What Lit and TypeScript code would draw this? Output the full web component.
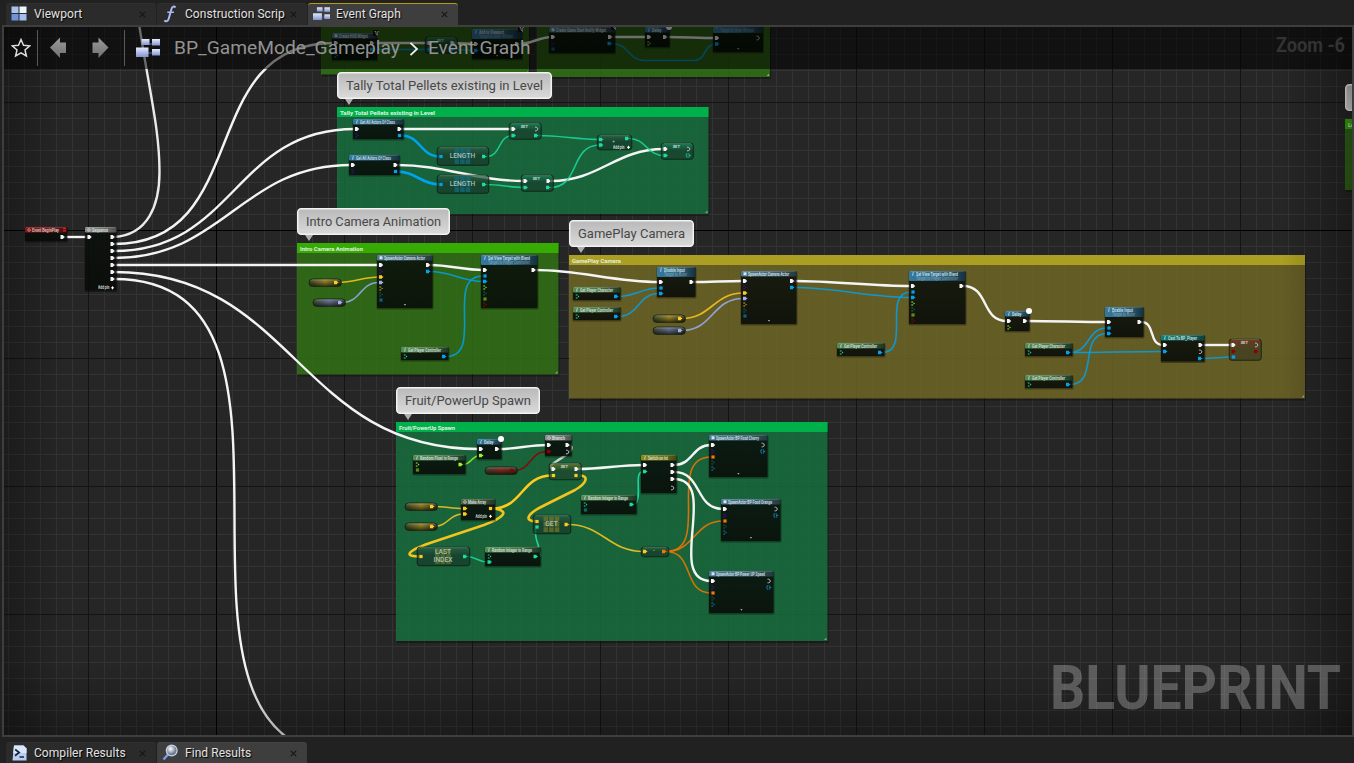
import { LitElement, html, svg, css } from "lit";
import { customElement, property } from "lit/decorators.js";

const WHITE = "#f4f4f4";
const BLUE = "#00a2ee";
const TEAL = "#1bdba0";
const YEL = "#ffc91e";
const LAV = "#9fadf5";
const GRN = "#9bf52e";
const RED = "#8e0000";
const ORG = "#f57600";
const PUR = "#4a10a8";
const DTEAL = "#0c6a5c";
const DBLUE = "#0f5b85";
const DGRN = "#5c8a1c";

// kind: e exec, o open exec, d data, s array, h open data, a open array
type Pin = [string, number, number, string?];
interface GNode {
  x: number; y: number; w: number; h: number;
  head: string; title: string; tw: number; sub?: string; subw?: number;
  pins: Pin[]; add?: number[]; arrow?: boolean; clock?: boolean; local?: boolean; mark?: boolean;
}

const spawn = (x: number, y: number): GNode => ({
  x, y, w: 55.5, h: 53, head: "blueS", title: "SpawnActor Camera Actor", tw: 41, arrow: true,
  pins: [["e", 4, 10], ["h", 4, 16.5, PUR], ["d", 4, 22, YEL], ["d", 4, 27.5, LAV], ["h", 4, 33.5, "#d9a520"],
    ["h", 4, 39.5, DTEAL], ["s", 4, 45, DBLUE], ["e", 51, 10], ["d", 51, 16.5, BLUE]],
});
const view = (x: number, y: number): GNode => ({
  x, y, w: 56.5, h: 53, head: "blue", title: "Set View Target with Blend", tw: 42, sub: "Target is Player Controller", subw: 42,
  pins: [["e", 4, 15], ["s", 4, 21, BLUE], ["d", 4, 26.5, BLUE], ["h", 4, 32.5, GRN], ["h", 4, 38.5, DTEAL],
    ["s", 4, 44, DGRN], ["h", 4, 49.5, "#a30000"], ["e", 52.5, 15]],
});
const getter = (x: number, y: number, what: string): GNode => ({
  x, y, w: 47.5, h: 13, head: "green", title: "Get Player " + what, tw: 33,
  pins: [["h", 4.5, 9.5, TEAL], ["d", 43, 9.5, BLUE]],
});
const input = (x: number, y: number, what: string): GNode => ({
  x, y, w: 38.5, h: 30, head: "blue", title: what + " Input", tw: 21, sub: "Target is Actor", subw: 23,
  pins: [["e", 4, 15], ["s", 4, 21, BLUE], ["d", 4, 26.5, BLUE], ["e", 34.5, 15]],
});
const actors = (x: number, y: number): GNode => ({
  x, y, w: 50.5, h: 20, head: "blue", title: "Get All Actors Of Class", tw: 35,
  pins: [["e", 4, 10], ["h", 4, 16.5, PUR], ["e", 46.5, 10], ["s", 46.5, 16.5, BLUE]],
});
const delay = (x: number, y: number, kind = "h"): GNode => ({
  x, y, w: 24.5, h: 20, head: "blue", title: "Delay", tw: 9.5, clock: true,
  pins: [["e", 4, 10], [kind, 4, 16.5, GRN], ["e", 20, 10]],
});
const food = (x: number, y: number, w: number, title: string, tw: number): GNode => ({
  x, y, w, h: 42, head: "blueS", title, tw, arrow: true,
  pins: [["e", 4, 10], ["h", 4, 16.5, PUR], ["s", 4, 22, ORG], ["h", 4, 27.5, DTEAL], ["h", 4, 33.5, "#1180bb"],
    ["o", w - 4.5, 10], ["a", w - 5, 16.5, "#1591cf"]],
});
const random = (x: number, y: number, w: number, title: string, tw: number, c: string, second: string): GNode => ({
  x, y, w, h: 19, head: "green", title, tw,
  pins: [["h", 4.5, 9.5, c], [second, 4.5, 15, second === "s" ? (c === GRN ? DGRN : DTEAL) : c], ["d", w - 5, 9.5, c]],
});

const NODES: GNode[] = [
  { x: 25, y: 227, w: 42, h: 14, head: "red", title: "Event BeginPlay", tw: 27, pins: [["e", 37.5, 10]], mark: true },
  {
    x: 85, y: 227, w: 31.5, h: 63.5, head: "gray", title: "Sequence", tw: 16, add: [13, 61, 27.5],
    pins: [["e", 4.5, 10], ...[10, 17, 24, 31, 38, 45, 52].map((v) => ["e", 27.5, v] as Pin)],
  },
  actors(353, 119), actors(349, 155),
  spawn(377, 255), view(481, 255), getter(401, 347, "Controller"),
  getter(573, 287, "Character"), getter(573, 307, "Controller"), input(657, 267, "Disable"),
  spawn(741, 271), view(909, 271), getter(837, 343, "Controller"), delay(1005, 311),
  getter(1025, 343, "Character"), getter(1025, 375, "Controller"), input(1105, 307, "Enable"),
  {
    x: 1161, y: 335, w: 43.5, h: 26.5, head: "teal", title: "Cast To BP_Player", tw: 29,
    pins: [["e", 4, 10], ["d", 4, 16.5, BLUE], ["e", 39.5, 10], ["o", 39.5, 16.8], ["d", 39, 23.5, BLUE]],
  },
  delay(477, 439, "d"),
  random(413, 455, 52.5, "Random Float in Range", 38, GRN, "s"),
  {
    x: 545, y: 435, w: 26.5, h: 21, head: "gray", title: "Branch", tw: 13,
    pins: [["e", 4, 10], ["d", 4, 16.5, RED], ["e", 22.5, 10], ["o", 22.5, 17]],
  },
  {
    x: 461, y: 499, w: 34, h: 21, head: "moss", title: "Make Array", tw: 18, add: [14.5, 17.5, 29.5],
    pins: [["d", 4, 9.5, YEL], ["d", 4, 15, YEL], ["s", 29.5, 9.5, YEL]],
  },
  random(485, 547, 55.5, "Random Integer in Range", 40, TEAL, "d"),
  random(581, 495, 55.5, "Random Integer in Range", 40, TEAL, "s"),
  {
    x: 641, y: 455, w: 35.5, h: 38, head: "yellow", title: "Switch on Int", tw: 20,
    pins: [["e", 4, 10], ["d", 4, 16.5, TEAL], ["e", 31.5, 10], ["e", 31.5, 17], ["e", 31.5, 24], ["o", 31.5, 33]],
  },
  food(709, 435, 58.5, "SpawnActor BP Food Cherry", 43),
  food(721, 499, 59.5, "SpawnActor BP Food Orange", 44),
  food(709, 571, 64.5, "SpawnActor BP Power UP Speed", 49),
  {
    x: 332, y: 33, w: 45, h: 27, head: "blueS", title: "Create HUD Widget", tw: 29, local: true,
    pins: [["e", 4, 10], ["h", 4, 16.5, PUR], ["h", 4, 22.5, BLUE], ["e", 40, 10], ["d", 40, 16.5, BLUE]],
  },
  {
    x: 472, y: 29, w: 50, h: 30, head: "blue", title: "Add to Viewport", tw: 25, sub: "Target is User Widget", subw: 34, local: true, arrow: true,
    pins: [["e", 4, 15], ["d", 4, 21.5, BLUE], ["e", 45, 15]],
  },
  {
    x: 549, y: 27, w: 66, h: 26, head: "blueS", title: "Create Game Start Notify Widget", tw: 50, local: true,
    pins: [["e", 4, 10], ["h", 4, 16.5, PUR], ["s", 4, 22, DBLUE], ["e", 61, 10], ["d", 60.5, 16.5, BLUE]],
  },
  delay(645, 27),
  {
    x: 713, y: 23, w: 50, h: 29, head: "blue", title: "", tw: 0, sub: "Target is User Widget", subw: 34, arrow: true,
    pins: [["e", 4, 15], ["d", 4, 21, BLUE], ["o", 45, 15]],
  },
];

interface Compact {
  x: number; y: number; w: number; h: number; tint: string; label?: string[]; small?: string;
  tiles?: string; pins: Pin[]; add?: number[];
}
const setNode = (x: number, y: number, c: string, tint: string, out: string, dataOut = "d", h = 16.5, extra: Pin[] = []): Compact => ({
  x, y, w: 32.5, h, tint, small: "SET",
  pins: [["e", 4.5, 6], [out, 27.5, 6], [c === YEL ? "s" : "d", 4.5, 12.5, c], [dataOut, 27, 12.5, c], ...extra],
});
const COMPACT: Compact[] = [
  { x: 437, y: 147, w: 52, h: 18.5, tint: "cgray", label: ["LENGTH"], tiles: "#137088", pins: [["s", 4, 9.5, BLUE], ["d", 47, 9.5, TEAL]] },
  { x: 437, y: 175, w: 52, h: 18.5, tint: "cgray", label: ["LENGTH"], tiles: "#137088", pins: [["s", 4, 9.5, BLUE], ["d", 47, 9.5, TEAL]] },
  setNode(509, 123, TEAL, "cteal", "o"),
  setNode(521, 175, TEAL, "cteal", "e"),
  { x: 597, y: 135, w: 35, h: 15, tint: "cgray", add: [16, 12.5, 31.5], small: "+", pins: [["d", 4, 4.5, TEAL], ["d", 4, 10, TEAL], ["d", 30, 3.5, TEAL]] },
  setNode(661, 143, TEAL, "cteal", "o", "a"),
  setNode(1229, 339, RED, "cred", "o", "d", 21.5, [["s", 4.5, 18, BLUE]]),
  setNode(549, 463, YEL, "cyel", "e", "s", 17),
  setNode(425, 37, BLUE, "cteal", "e"),
  { x: 533, y: 515, w: 38, h: 19, tint: "cgray", label: ["GET"], tiles: "#7d7d28", pins: [["s", 4, 6.5, YEL], ["s", 4, 12, TEAL], ["d", 33.5, 9.5, YEL]] },
  { x: 417, y: 547, w: 53, h: 19, tint: "cgray", label: ["LAST", "INDEX"], tiles: "#6c7a2a", pins: [["s", 4, 9.5, YEL], ["d", 48, 9.5, TEAL]] },
  { x: 641, y: 547, w: 28, h: 10, tint: "cgray", small: "•", pins: [["d", 4, 4.5, YEL], ["d", 23, 4.5, ORG]] },
];

// variable pills: x, y, gradient, pin colour
const VARS: [number, number, string, string][] = [
  [309, 279, "pyel", YEL], [313, 299, "plav", LAV], [653, 315, "pyel", YEL], [653, 327, "plav", LAV],
  [485, 467, "pred", RED], [405, 503, "pyel", YEL], [405, 523, "pyel", YEL],
];

// wires between pins: x1, y1, x2, y2, colour, thickness
const W = 2.4, T = 1.6, A = 2.6;
const WIRES: [number, number, number, number, string, number][] = [
  [64, 237, 88, 237, WHITE, W],
  [114, 244, 334, 43, WHITE, W], [114, 251, 355, 129, WHITE, W], [114, 258, 351, 165, WHITE, W],
  [114, 265, 379, 265, WHITE, W], [114, 272, 479, 449, WHITE, W], [114, 279, 355, 757, WHITE, W],
  [401, 129, 512, 129, WHITE, W], [397, 165, 524, 181, WHITE, W], [551, 181, 664, 149, WHITE, W],
  [401, 135.5, 440, 156.5, BLUE, A], [397, 171.5, 440, 184.5, BLUE, A],
  [486, 156.5, 513, 135.5, TEAL, T], [486, 184.5, 524, 187.5, TEAL, T],
  [538, 135.5, 600, 139.5, TEAL, T], [550, 187.5, 600, 145, TEAL, T], [629, 138.5, 664, 155.5, TEAL, T],
  [430, 265, 483, 270, WHITE, W], [430, 271.5, 483, 281.5, BLUE, T], [446, 356.5, 483, 276, BLUE, T],
  [338, 282.5, 379, 277, YEL, T], [342, 302.5, 379, 282.5, LAV, T],
  [535, 270, 659, 282, WHITE, W], [618, 296.5, 659, 288, BLUE, T], [618, 316.5, 659, 293.5, BLUE, T],
  [693, 282, 743, 281, WHITE, W], [682, 318.5, 743, 293, YEL, T], [682, 330.5, 743, 298.5, LAV, T],
  [794, 281, 911, 286, WHITE, W], [794, 287.5, 911, 297.5, BLUE, T], [882, 352.5, 911, 292, BLUE, T],
  [963, 286, 1007, 321, WHITE, W], [1027, 321, 1107, 322, WHITE, W],
  [1070, 352.5, 1107, 328, BLUE, T], [1070, 384.5, 1107, 333.5, BLUE, T], [1070, 352.5, 1163, 351.5, BLUE, T],
  [1141, 322, 1163, 345, WHITE, W], [1202, 345, 1232, 345, WHITE, W], [1202, 358.5, 1232, 357, BLUE, T],
  [499, 449, 547, 445, WHITE, W], [463, 464.5, 480, 455.5, GRN, T], [514, 470.5, 547, 451.5, RED, T],
  [578, 469, 643, 465, WHITE, W], [434, 506.5, 463, 508.5, YEL, T], [434, 526.5, 463, 514, YEL, T],
  [492, 508.5, 552, 475.5, YEL, A], [467, 556.5, 487, 562, TEAL, T], [568, 524.5, 643, 551.5, YEL, T],
  [666, 551.5, 711, 457, ORG, T], [666, 551.5, 723, 521, ORG, T], [666, 551.5, 711, 593, ORG, T],
  [674, 465, 711, 445, WHITE, W], [674, 472, 723, 509, WHITE, W], [674, 479, 711, 581, WHITE, W],
  [374, 43, 430, 43, WHITE, W], [454, 43, 476, 44, WHITE, W], [374, 49.5, 430, 49.5, BLUE, T], [454, 49.5, 476, 50.5, BLUE, T],
  [519, 44, 552, 37, WHITE, W], [612, 37, 648, 37, WHITE, W], [667, 37, 716, 38, WHITE, W],
  [612, 43.5, 645, 60.5, BLUE, T], [645, 60.5, 694, 60.5, BLUE, T], [694, 60.5, 716, 44, BLUE, T],
];
const LOOPS: [string, string, number][] = [
  ["M114 237C148 235 159.500 205 159.500 172C159.500 130 150 95 139 24", WHITE, W],
  ["M569 445C577 448 566 455 557 461C550 465 549 469 553 469", "#d8d8d8", W],
  ["M494 508.500C511 511 503 518 484 525L430 543C404 552 405 557 421 556.500", YEL, A],
  ["M580 475.500C589 476 587 483 575 490L545 505C526 514 524 521 536 521.500", YEL, A],
  ["M540 556.500C541 545 533 540 536 527", TEAL, T],
  ["M635 504.500C643 497 633 472 643 471.500", TEAL, T],
];

// comment boxes: x, y, w, h, header, body, title, title width
const COMMENTS: [number, number, number, number, string, string, string, number][] = [
  [321, -60, 208, 134.5, "#35ab04", "rgba(55,127,22,.75)", "", 0],
  [537, -60, 233, 137, "#35ab04", "rgba(55,127,22,.75)", "", 0],
  [337, 107, 371.5, 107, "#00b04b", "rgba(24,124,68,.75)", "Tally Total Pellets existing in Level", 95],
  [297, 243, 261.5, 131.500, "#35ab04", "rgba(55,127,22,.75)", "Intro Camera Animation", 63],
  [569, 255, 736, 143.500, "#ab9e22", "rgba(126,115,41,.75)", "GamePlay Camera", 49],
  [396, 422, 431.5, 219, "#00b04b", "rgba(24,124,68,.75)", "Fruit/PowerUp Spawn", 56],
  [1345, 119, 60, 71, "#35ab04", "rgba(55,127,22,.75)", "Le", 6],
];
const BUBBLES: [number, number, number, string, number][] = [
  [337, 72, 215, "Tally Total Pellets existing in Level", 197],
  [297, 208, 153, "Intro Camera Animation", 135],
  [569, 220, 125, "GamePlay Camera", 107],
  [396, 387, 144, "Fruit/PowerUp Spawn", 126],
  [1345, 84, 120, "", 0],
];

const wirePath = (x1: number, y1: number, x2: number, y2: number) => {
  const t = (Math.abs(x2 - x1) + Math.abs(y2 - y1)) / 3;
  return `M${x1} ${y1}C${x1 + t} ${y1} ${x2 - t} ${y2} ${x2} ${y2}`;
};

const drawPin = (nx: number, ny: number, [k, px, py, color]: Pin) => {
  const x = nx + px, y = ny + py, c = color ?? WHITE;
  switch (k) {
    case "e": return svg`<path d="M${x - 2} ${y - 2}h2.200l2 2l-2 2h-2.200z" fill=${WHITE}/>`;
    case "o": return svg`<path d="M${x - 1.5} ${y - 1.800}h1.200q1.600 .4 1.600 1.800t-1.600 1.800h-1.200" fill="none" stroke="#c4c4c4" stroke-width=".9"/>`;
    case "d": return svg`<path d="M${x - 2} ${y - 1.700}h3v.8l1.600 .9l-1.600 .9v.8h-3z" fill=${c}/>`;
    case "s": return svg`<rect x=${x - 1.600} y=${y - 1.600} width="3.200" height="3.200" fill=${c}/>`;
    case "a": return svg`<rect x=${x - 1.700} y=${y - 1.500} width="3" height="3" fill="none" stroke=${c} stroke-width="1" stroke-dasharray="1.200 .7"/><path d="M${x + 1.800} ${y - 1}l1.200 1l-1.200 1z" fill=${c}/>`;
    default: return svg`<path d="M${x - 1.700} ${y - 1.500}h1.800m-1.800 3h1.800" fill="none" stroke=${c} stroke-width="1"/><path d="M${x + 0.500} ${y - 1.100}l1.500 1.100l-1.500 1.100z" fill=${c}/>`;
  }
};

const addPin = (x: number, y: number, [tx, ty, px]: number[]) => svg`
  <text class="tiny" x=${x + tx} y=${y + ty + 1.300} textLength="11.500" lengthAdjust="spacingAndGlyphs">Add pin</text>
  <path d="M${x + px - 1.500} ${y + ty - 0.200}h3m-1.500 -1.500v3" stroke="#fff" stroke-width="1"/>`;

const HEADS: [string, string, string][] = [
  ["blue", "#35789f", "#14303d"], ["blueS", "#4b7793", "#22383e"], ["green", "#568a52", "#1b3423"],
  ["gray", "#8d8d8d", "#4c4e4d"], ["red", "#a51a1a", "#3d0d0d"], ["teal", "#137d78", "#0d4040"],
  ["yellow", "#8c8a14", "#3f4714"], ["moss", "#55664c", "#24352a"],
];
const TINTS: [string, string, string][] = [
  ["cgray", "#2c5f47", "#173a2a"], ["cteal", "#1c805e", "#183f2d"], ["cred", "#702a1e", "#3f3c20"], ["cyel", "#77762a", "#1c452e"],
];
const PILLS: [string, string][] = [["pyel", "#a08a28"], ["plav", "#6a7499"], ["pred", "#8a2c24"]];

const drawNode = (n: GNode) => {
  const hh = n.sub ? 10 : 5.500;
  return svg`
    <rect x=${n.x - 0.500} y=${n.y + 0.500} width=${n.w + 1.500} height=${n.h + 1} rx="1.500" fill="#000" opacity=".35"/>
    <rect x=${n.x} y=${n.y} width=${n.w} height=${n.h} rx="1.200" fill="url(#body)"/>
    <rect x=${n.x} y=${n.y} width=${n.w} height=${hh} rx="1.200" fill=${`url(#${n.head})`}/>
    <path d="M${n.x + 1} ${n.y + 0.400}h${n.w - 2}" stroke="#fff" stroke-opacity=".25" stroke-width=".7"/>
    ${n.head === "blueS"
      ? svg`<rect x=${n.x + 2.500} y=${n.y + 1.300} width="3" height="3" fill="#d7e4ea"/>`
      : n.head === "gray" || n.head === "red" || n.head === "moss"
        ? svg`<circle cx=${n.x + 4} cy=${n.y + 3} r="1.300" fill="none" stroke="#ddd" stroke-width=".7"/>`
        : svg`<path d="M${n.x + 4.800} ${n.y + 1.200}q-1 0-1 1.600v2" fill="none" stroke="#bfe6ff" stroke-width=".8"/>`}
    ${n.title ? svg`<text class="tiny" x=${n.x + 7} y=${n.y + 4.600} textLength=${n.tw} lengthAdjust="spacingAndGlyphs">${n.title}</text>` : ""}
    ${n.sub ? svg`<text class="tiny dim" x=${n.x + 7} y=${n.y + 9.200} textLength=${n.subw} lengthAdjust="spacingAndGlyphs">${n.sub}</text>` : ""}
    ${n.pins.map((p) => drawPin(n.x, n.y, p))}
    ${n.add ? addPin(n.x, n.y, n.add) : ""}
    ${n.arrow ? svg`<path d="M${n.x + n.w / 2 - 1} ${n.y + n.h - 3.700}h2.400l-1.200 1.300z" fill="#ddd"/>` : ""}
    ${n.clock ? svg`<circle cx=${n.x + n.w - 0.500} cy=${n.y} r="3" fill="#fff"/>` : ""}
    ${n.local ? svg`<rect x=${n.x + n.w - 4} y=${n.y - 3} width="6" height="6" rx="1" fill="#101010"/><path d="M${n.x + n.w - 2.500} ${n.y - 1.500}h1.500v2.500l1.800 1.500v-4h1" fill="none" stroke="#f0f0f0" stroke-width="1"/>` : ""}
    ${n.mark ? svg`<rect x=${n.x + n.w - 4} y=${n.y + 1} width="3" height="3.500" fill="#e01c1c"/><path d="M${n.x + n.w - 4} ${n.y + 2.700}h3" stroke="#400" stroke-width=".7"/>` : ""}`;
};

const drawCompact = (n: Compact) => {
  const cx = n.x + n.w / 2 - (n.label ? 0.500 : 0);
  return svg`
    <rect x=${n.x + 0.250} y=${n.y + 0.250} width=${n.w - 0.500} height=${n.h - 0.500} rx="2.400" fill=${`url(#${n.tint})`} fill-opacity=".75" stroke="#0a1c12" stroke-opacity=".8" stroke-width="1"/>
    <path d="M${n.x + 2.500} ${n.y + 0.600}h${n.w - 5}" stroke="#cfe" stroke-opacity=".35" stroke-width=".8"/>
    ${n.tiles ? [0, 1, 2].map((i) => [0, 1, 2].map((j) => svg`<rect x=${cx - 8 + i * 5.600} y=${n.y + 1.500 + j * 5.400} width="4.600" height="4.700" fill=${n.tiles} opacity=".65"/>`)) : ""}
    ${n.label ? n.label.map((t, i) => svg`<text class="label" x=${cx} y=${n.label!.length > 1 ? n.y + 7 + i * 8 : n.y + 11.200}>${t}</text>`) : ""}
    ${n.small ? svg`<text class="tiny mid" x=${n.x + n.w / 2 - 1} y=${n.small === "+" ? n.y + 8 : n.y + 5}>${n.small}</text>` : ""}
    ${n.pins.map((p) => drawPin(n.x, n.y, p))}
    ${n.add ? addPin(n.x, n.y, n.add) : ""}`;
};

@customElement("blueprint-graph")
class BlueprintGraph extends LitElement {
  static styles = css`
    :host { display: block; width: 1348px; height: 708px; }
    svg { display: block; font-family: Roboto, "Liberation Sans", sans-serif; }
    .tiny { font-size: 4.600px; font-weight: 700; fill: #dfe6e2; opacity: .88; }
    .dim { opacity: .32; }
    .mid { text-anchor: middle; font-size: 4px; }
    .label { font-size: 6.700px; font-weight: 500; fill: #a9bfb4; text-anchor: middle; }
    .ctitle { font-size: 5.800px; font-weight: 700; fill: #e0f0e0; }
    .bubble { font-size: 13.500px; fill: #484848; }
    .mark { font-size: 62px; font-weight: 700; fill: #fff; opacity: .25; }
  `;
  render() {
    const xs = Array.from({ length: 85 }, (_, i) => 8 + i * 16);
    const ys = Array.from({ length: 45 }, (_, i) => 22 + i * 16);
    return html`<svg width="1348" height="708" viewBox="4 27 1348 708">
      <defs>
        <linearGradient id="body" x1="0" y1="0" x2="0" y2="1"><stop offset="0" stop-color="#0b100c" stop-opacity=".76"/><stop offset="1" stop-color="#080c08" stop-opacity=".84"/></linearGradient>
        ${HEADS.map(([id, a, b]) => svg`<linearGradient id=${id}><stop offset="0" stop-color=${a}/><stop offset=".5" stop-color=${a} stop-opacity=".85"/><stop offset="1" stop-color=${b}/></linearGradient>`)}
        ${TINTS.map(([id, a, b]) => svg`<linearGradient id=${id} x1="0" y1="0" x2="0" y2="1"><stop offset="0" stop-color=${a}/><stop offset=".45" stop-color=${b}/><stop offset="1" stop-color=${b}/></linearGradient>`)}
        ${PILLS.map(([id, a]) => svg`<linearGradient id=${id}><stop offset="0" stop-color="#3a4a2c"/><stop offset=".5" stop-color=${a}/><stop offset="1" stop-color="#303a24"/></linearGradient>`)}
        <linearGradient id="pillShade" x1="0" y1="0" x2="0" y2="1"><stop offset="0" stop-color="#fff" stop-opacity=".3"/><stop offset=".35" stop-color="#000" stop-opacity=".1"/><stop offset="1" stop-color="#000" stop-opacity=".6"/></linearGradient>
        <linearGradient id="bub" x1="0" y1="0" x2="0" y2="1"><stop offset="0" stop-color="#b9b9b9"/><stop offset="1" stop-color="#dadada"/></linearGradient>
        <linearGradient id="edgeL"><stop offset="0" stop-color="#000" stop-opacity=".28"/><stop offset="1" stop-color="#000" stop-opacity="0"/></linearGradient>
        <linearGradient id="edgeR"><stop offset="0" stop-color="#000" stop-opacity="0"/><stop offset="1" stop-color="#000" stop-opacity=".3"/></linearGradient>
        <linearGradient id="edgeB" x1="0" y1="0" x2="0" y2="1"><stop offset="0" stop-color="#000" stop-opacity="0"/><stop offset="1" stop-color="#000" stop-opacity=".28"/></linearGradient>
      </defs>
      <rect x="4" y="27" width="1348" height="708" fill="#262626"/>
      ${xs.map((x) => svg`<rect x=${x} y="27" width="1" height="708" fill="#333"/>`)}
      ${ys.map((y) => svg`<rect x="4" y=${y} width="1348" height="1" fill="#333"/>`)}
      ${xs.filter((x) => x % 128 === 88).map((x) => svg`<rect x=${x} y="27" width="1" height="708" fill=${x === 216 ? "#000" : "#141414"}/>`)}
      ${ys.filter((y) => y % 128 === 102).map((y) => svg`<rect x="4" y=${y} width="1348" height="1" fill=${y === 230 ? "#000" : "#141414"}/>`)}
      ${COMMENTS.map(([x, y, w, h, head, body, title, tw]) => svg`
        <rect x=${x + 1} y=${y + 2} width=${w} height=${h} fill="#000" opacity=".3"/>
        <rect x=${x} y=${y} width=${w} height=${h} fill=${body}/>
        <rect x=${x} y=${y} width=${w} height="10" fill=${head}/>
        ${title ? svg`<text class="ctitle" x=${x + 3} y=${y + 8} textLength=${tw} lengthAdjust="spacingAndGlyphs">${title}</text>` : ""}
        <path d="M${x + w - 1} ${y + h - 3.500}v2.500h-2.500z" fill="#fff" opacity=".45"/>`)}
      ${WIRES.map(([a, b, c, d, col, t]) => svg`<path d=${wirePath(a, b, c, d)} fill="none" stroke=${col} stroke-width=${t} stroke-opacity=${col === WHITE || t === A ? 1 : 0.850}/>`)}
      ${LOOPS.map(([d, col, t]) => svg`<path d=${d} fill="none" stroke=${col} stroke-width=${t} stroke-opacity=".95"/>`)}
      ${VARS.map(([x, y, g, c]) => svg`
        <rect x=${x} y=${y} width="32.500" height="7.500" rx="3.700" fill=${`url(#${g})`} stroke="#0a120a" stroke-opacity=".7" stroke-width="1"/>
        <rect x=${x + 0.500} y=${y + 0.500} width="31.500" height="6.500" rx="3.200" fill="url(#pillShade)"/>
        ${drawPin(x, y, ["d", 27, 3.500, c])}`)}
      ${COMPACT.map(drawCompact)}
      ${NODES.map(drawNode)}
      ${BUBBLES.map(([x, y, w, t, tw]) => svg`
        <path d="M${x + 8} ${y + 27}h8l-4 6z" fill="#c8c8c8" opacity=".85"/>
        <rect x=${x + 0.750} y=${y + 0.750} width=${w - 1.500} height="25.500" rx="3.500" fill="url(#bub)" stroke="#f2f2f2" stroke-width="1.500"/>
        ${t ? svg`<text class="bubble" x=${x + 9} y=${y + 18} textLength=${tw} lengthAdjust="spacingAndGlyphs">${t}</text>` : ""}`)}
      <rect x="4" y="27" width="60" height="708" fill="url(#edgeL)"/>
      <rect x="1282" y="27" width="70" height="708" fill="url(#edgeR)"/>
      <rect x="4" y="665" width="1348" height="70" fill="url(#edgeB)"/>
      <text class="mark" x="1050" y="708.500" textLength="291" lengthAdjust="spacingAndGlyphs">BLUEPRINT</text>
    </svg>`;
  }
}

const blocksIcon = (w: number, h: number) => html`<svg width=${w} height=${h} viewBox="0 0 24 19">
  <defs><linearGradient id="bk" x1="0" y1="0" x2="0" y2="1"><stop offset="0" stop-color="#e6ebff"/><stop offset="1" stop-color="#8293cf"/></linearGradient></defs>
  <path d="M6 5h10M12 14h8" stroke="#5d6fae" stroke-width="1"/>
  <rect x="5.500" width="8" height="6" fill="url(#bk)"/><rect x="16" width="8" height="6.500" fill="url(#bk)"/>
  <rect y="8.500" width="12.500" height="9.500" fill="url(#bk)"/><rect x="16" y="10" width="8" height="6.500" fill="url(#bk)"/></svg>`;

const ICONS: Record<string, unknown> = {
  viewport: html`<svg width="16" height="15" viewBox="0 0 16 15"><rect x=".5" y=".5" width="7" height="6.500" fill="#a9c2ee"/><rect x="8.500" y=".5" width="7" height="6.500" fill="#e8f6fb"/><rect x=".5" y="8" width="7" height="6.500" fill="#6f93d8"/><rect x="8.500" y="8" width="7" height="6.500" fill="#a2bdf0"/></svg>`,
  func: html`<svg width="14" height="18" viewBox="0 0 14 18"><path d="M12.500 2.500C11 .8 9.200 1.400 8.500 4L5.600 14C5 16.200 3 17 1.300 15.600" fill="none" stroke="#a9b9f2" stroke-width="2"/><path d="M4.300 7.200h6.600" stroke="#a9b9f2" stroke-width="1.600"/></svg>`,
  graph: blocksIcon(17, 14),
  compile: html`<svg width="15" height="16" viewBox="0 0 15 16"><path d="M2 .5h9.500l3 3V15.500H.5z" fill="#b9cdf2"/><path d="M2 .5h9.500l3 3V8H1.300z" fill="#d9e5fa"/><path d="M3.200 4.500l4 3l-4.200 3.200M7.500 12h4.500" stroke="#16243f" stroke-width="1.700" fill="none"/></svg>`,
  find: html`<svg width="17" height="17" viewBox="0 0 17 17"><defs><radialGradient id="ln" cx=".4" cy=".35"><stop offset="0" stop-color="#fff"/><stop offset="1" stop-color="#6f7a8c"/></radialGradient></defs><path d="M1.500 15.500l4.500-5" stroke="#7d9be6" stroke-width="2.400"/><circle cx="9.700" cy="6.500" r="5.400" fill="url(#ln)" stroke="#c7d3ee" stroke-width="1.200"/></svg>`,
};

@customElement("dock-tab")
class DockTab extends LitElement {
  @property() icon = "";
  @property() label = "";
  @property() mode = "";
  static styles = css`
    .tab { box-sizing: border-box; width: 150px; height: 22px; display: flex; align-items: center; padding: 0 10px 2px 4px;
      background: #2b2b2b; border-radius: 3px 3px 0 0; border-top: 1px solid #303030; overflow: hidden;
      font: 12px Roboto, "Liberation Sans", sans-serif; letter-spacing: .06px; color: #e2e2e2; text-shadow: 1px 1px 1px #000; }
    .on { background: #3e3e3e; border-top-color: #444; }
    .gold { border-top-color: #b99a13; }
    .icon { width: 18px; height: 18px; display: flex; align-items: center; justify-content: center; margin-right: 6px; }
    .label { flex: 1; white-space: nowrap; }
    .close { width: 7px; height: 7px; margin-top: 2px; }
  `;
  render() {
    return html`<div class="tab ${this.mode}"><span class="icon">${ICONS[this.icon]}</span><span class="label">${this.label}</span>
      <svg class="close" viewBox="0 0 7 7"><path d="M.8 .8l5.400 5.400M6.200 .8l-5.400 5.400" stroke="#151515" stroke-width="1.100"/></svg></div>`;
  }
}

@customElement("app-root")
class AppRoot extends LitElement {
  static styles = css`
    :host { display: flex; flex-direction: column; width: 1354px; height: 763px; background: #212121; overflow: hidden;
      font-family: Roboto, "Liberation Sans", sans-serif; }
    .tabs { display: flex; gap: 1px; padding: 3px 0 0 6px; height: 22px; }
    .foot { padding-top: 5px; height: 21px; }
    .frame { position: relative; margin-left: 2px; border: 2px solid #3e3e3e; height: 708px; overflow: hidden; }
    .crumbs { position: absolute; inset: 0 0 auto 0; height: 42px; display: flex; align-items: center; background: rgba(0, 0, 0, .55); }
    .sep { width: 1px; height: 36px; margin-top: -1px; background: #5a5a5a; }
    .star { margin: 0 6px 0 7px; }
    .back { margin: -2px 0 0 12px; }
    .fwd { margin: -2px 15px 0 26px; }
    .blocks { margin: 0 14px 0 11px; height: 19px; }
    .name { font-size: 19.200px; margin-top: -2px; color: #939393; white-space: nowrap; }
    .chev { margin: 1px 9px 0 9px; }
    .zoom { margin-left: auto; margin-right: 5px; margin-top: -6px; }
    .ztext { font-size: 20px; font-weight: 700; fill: #333; }
  `;
  render() {
    const arrow = svg`<path d="M0 11.500L10 1.500V6.500H16V17H10V22z" fill="url(#ar)"/><defs><linearGradient id="ar" x1="0" y1="0" x2="0" y2="1"><stop offset="0" stop-color="#9b9b9b"/><stop offset="1" stop-color="#707070"/></linearGradient></defs>`;
    return html`
      <div class="tabs">
        <dock-tab icon="viewport" label="Viewport"></dock-tab>
        <dock-tab icon="func" label="Construction Scrip"></dock-tab>
        <dock-tab icon="graph" label="Event Graph" mode="on gold"></dock-tab>
      </div>
      <div class="frame">
        <blueprint-graph></blueprint-graph>
        <div class="crumbs">
          <svg class="star" width="20" height="20" viewBox="0 0 20 20"><path d="M10 1.500l2.500 5.700l6.200 .6l-4.700 4.100l1.400 6.100L10 14.800L4.600 18L6 11.900L1.300 7.800l6.200-.6z" fill="none" stroke="#dcdcdc" stroke-width="1.500"/></svg>
          <span class="sep"></span>
          <svg class="back" width="16" height="23" viewBox="0 0 16 23">${arrow}</svg>
          <svg class="fwd" width="17" height="23" viewBox="0 0 16 23"><g transform="translate(16 0) scale(-1 1)">${arrow}</g></svg>
          <span class="sep"></span>
          <span class="blocks">${blocksIcon(24, 19)}</span>
          <span class="name">BP_GameMode_Gameplay</span>
          <svg class="chev" width="10" height="14" viewBox="0 0 10 14"><path d="M1.500 .8l6.500 6.200l-6.500 6.200" fill="none" stroke="#f0f0f0" stroke-width="1.800"/></svg>
          <span class="name">Event Graph</span>
          <svg class="zoom" width="72" height="26" viewBox="0 0 72 26"><text class="ztext" x="1" y="20" textLength="69" lengthAdjust="spacingAndGlyphs">Zoom -6</text></svg>
        </div>
      </div>
      <div class="tabs foot">
        <dock-tab icon="compile" label="Compiler Results"></dock-tab>
        <dock-tab icon="find" label="Find Results" mode="on"></dock-tab>
      </div>`;
  }
}
